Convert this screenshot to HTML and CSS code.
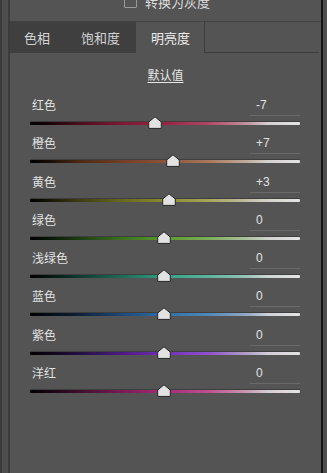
FILE: index.html
```html
<!DOCTYPE html>
<html lang="zh">
<head>
<meta charset="utf-8">
<link rel="stylesheet" href="styles.css">
</head>
<body>
<div class="shell">
  <div class="top">
    <span class="check"></span>
    <span class="check-label">转换为灰度</span>
  </div>
  <div class="tabs">
    <div class="tab tab-1">色相</div>
    <div class="tab tab-2">饱和度</div>
    <div class="tab tab-active">明亮度</div>
    <div class="tab-rest"></div>
  </div>
  <div class="panel">
    <div class="title"><span>默认值</span></div>
    <div class="rows">
      <div class="row">
        <div class="head"><span class="label">红色</span><span class="value">-7</span></div>
        <div class="track t-red"><svg class="thumb" style="left:118px" width="14" height="13" viewBox="0 0 14 13"><path d="M7 0.8 L13.3 6 V12.4 H0.7 V6 Z"/></svg></div>
      </div>
      <div class="row">
        <div class="head"><span class="label">橙色</span><span class="value">+7</span></div>
        <div class="track t-orange"><svg class="thumb" style="left:136px" width="14" height="13" viewBox="0 0 14 13"><path d="M7 0.8 L13.3 6 V12.4 H0.7 V6 Z"/></svg></div>
      </div>
      <div class="row">
        <div class="head"><span class="label">黄色</span><span class="value">+3</span></div>
        <div class="track t-yellow"><svg class="thumb" style="left:132px" width="14" height="13" viewBox="0 0 14 13"><path d="M7 0.8 L13.3 6 V12.4 H0.7 V6 Z"/></svg></div>
      </div>
      <div class="row">
        <div class="head"><span class="label">绿色</span><span class="value">0</span></div>
        <div class="track t-green"><svg class="thumb" style="left:127px" width="14" height="13" viewBox="0 0 14 13"><path d="M7 0.8 L13.3 6 V12.4 H0.7 V6 Z"/></svg></div>
      </div>
      <div class="row">
        <div class="head"><span class="label">浅绿色</span><span class="value">0</span></div>
        <div class="track t-aqua"><svg class="thumb" style="left:127px" width="14" height="13" viewBox="0 0 14 13"><path d="M7 0.8 L13.3 6 V12.4 H0.7 V6 Z"/></svg></div>
      </div>
      <div class="row">
        <div class="head"><span class="label">蓝色</span><span class="value">0</span></div>
        <div class="track t-blue"><svg class="thumb" style="left:127px" width="14" height="13" viewBox="0 0 14 13"><path d="M7 0.8 L13.3 6 V12.4 H0.7 V6 Z"/></svg></div>
      </div>
      <div class="row">
        <div class="head"><span class="label">紫色</span><span class="value">0</span></div>
        <div class="track t-purple"><svg class="thumb" style="left:127px" width="14" height="13" viewBox="0 0 14 13"><path d="M7 0.8 L13.3 6 V12.4 H0.7 V6 Z"/></svg></div>
      </div>
      <div class="row">
        <div class="head"><span class="label">洋红</span><span class="value">0</span></div>
        <div class="track t-magenta"><svg class="thumb" style="left:127px" width="14" height="13" viewBox="0 0 14 13"><path d="M7 0.8 L13.3 6 V12.4 H0.7 V6 Z"/></svg></div>
      </div>
    </div>
  </div>
</div>
</body>
</html>
```

FILE: styles.css
```css
html, body {
  margin: 0;
  padding: 0;
}
body {
  width: 327px;
  height: 473px;
  overflow: hidden;
  background: #4e4e4e;
  font-family: "Noto Sans CJK SC", "Liberation Sans", sans-serif;
  color: #dedede;
  box-shadow: inset 2px 0 0 #3a3a3a;
}
.shell {
  margin-left: 8px;
  width: 311px;
  height: 473px;
  background: #545454;
  border-left: 2px solid #3c3c3c;
  border-right: 2px solid #151515;
  display: flex;
  flex-direction: column;
}
.top {
  height: 22px;
  border-bottom: 1px solid #424242;
  display: flex;
  align-items: flex-start;
  padding-left: 114px;
  box-sizing: border-box;
  overflow: hidden;
}
.check {
  width: 11px;
  height: 11px;
  border: 1px solid #9a9a9a;
  border-radius: 1px;
  margin-top: -5px;
  flex: none;
}
.check-label {
  font-size: 13px;
  line-height: 16px;
  margin-top: -6px;
  margin-left: 8px;
  color: #dcdcdc;
}
.tabs {
  display: flex;
  height: 31px;
}
.tab {
  font-size: 13px;
  line-height: 32px;
  background: #3f3f3f;
  color: #d4d4d4;
  box-sizing: border-box;
}
.tab-1 {
  width: 54px;
  padding-left: 14px;
}
.tab-2 {
  width: 72px;
  padding-left: 17px;
}
.tab-active {
  width: 68px;
  padding-left: 15px;
  background: #545454;
  color: #ececec;
}
.tab-rest {
  flex: 1;
  border-left: 1px solid #3d3d3d;
  border-bottom: 1px solid #3d3d3d;
  margin-right: 2px;
}
.panel {
  flex: 1;
  padding-top: 13px;
}
.title {
  text-align: center;
  font-size: 12px;
  line-height: 17px;
  color: #e6e6e6;
}
.title span {
  text-decoration: underline;
  text-underline-offset: 2px;
}
.rows {
  margin-top: 12px;
  margin-left: 20px;
  width: 270px;
}
.row {
  height: 38.3px;
}
.head {
  display: flex;
  justify-content: space-between;
  align-items: flex-start;
  height: 21px;
}
.label {
  font-size: 12px;
  line-height: 20px;
  padding-left: 2px;
  color: #e2e2e2;
}
.value {
  width: 50px;
  box-sizing: border-box;
  padding-left: 6px;
  font-family: "Liberation Sans", sans-serif;
  font-size: 12px;
  line-height: 20px;
  color: #e2e2e2;
  border-bottom: 1px solid #6a6a6a;
}
.track {
  position: relative;
  margin-top: 6px;
  height: 3px;
  border-radius: 1px;
  box-shadow: 0 -1px 0 #3e3e3e;
}
.thumb {
  position: absolute;
  top: -6px;
}
.thumb path {
  fill: #e2e2e2;
  stroke: #262626;
  stroke-width: 1;
}
.t-red { background: linear-gradient(to right, #000 0%, #140306 6%, #4a0d1c 18%, #7e1a34 35%, #982442 50%, #b24666 66%, #c0909e 80%, #d4d0d1 88%, #e4e4e4 100%); }
.t-orange { background: linear-gradient(to right, #000 0%, #140a04 6%, #4a2814 18%, #744028 35%, #8c5438 50%, #a8785c 66%, #c0aa9c 80%, #d4d1ce 88%, #e4e4e4 100%); }
.t-yellow { background: linear-gradient(to right, #000 0%, #121204 6%, #3c3c12 18%, #6a6a22 35%, #8a8a2e 50%, #a6a45a 66%, #bebca0 80%, #d4d4cc 88%, #e4e4e4 100%); }
.t-green { background: linear-gradient(to right, #000 0%, #061206 6%, #1c3c10 18%, #3e7420 35%, #5c9a30 50%, #7cae58 66%, #a8c09c 80%, #ced4cc 88%, #e4e4e4 100%); }
.t-aqua { background: linear-gradient(to right, #000 0%, #04120e 6%, #0e3a2e 18%, #1e6e58 35%, #32a084 50%, #5cb49c 66%, #98c2b6 80%, #ccd6d2 88%, #e4e4e4 100%); }
.t-blue { background: linear-gradient(to right, #000 0%, #040a14 6%, #0e2038 18%, #1e4c7c 35%, #306ea8 50%, #5288b8 66%, #90a8c0 80%, #ccd2d8 88%, #e4e4e4 100%); }
.t-purple { background: linear-gradient(to right, #000 0%, #0c0414 6%, #240e40 18%, #4e1c84 35%, #7030b8 50%, #9050cc 66%, #b09cc4 80%, #d2ccd8 88%, #e4e4e4 100%); }
.t-magenta { background: linear-gradient(to right, #000 0%, #14040e 6%, #3e0e2c 18%, #7c1c58 35%, #a42c76 50%, #bc5090 66%, #c498b0 80%, #d6ccd2 88%, #e4e4e4 100%); }
```
